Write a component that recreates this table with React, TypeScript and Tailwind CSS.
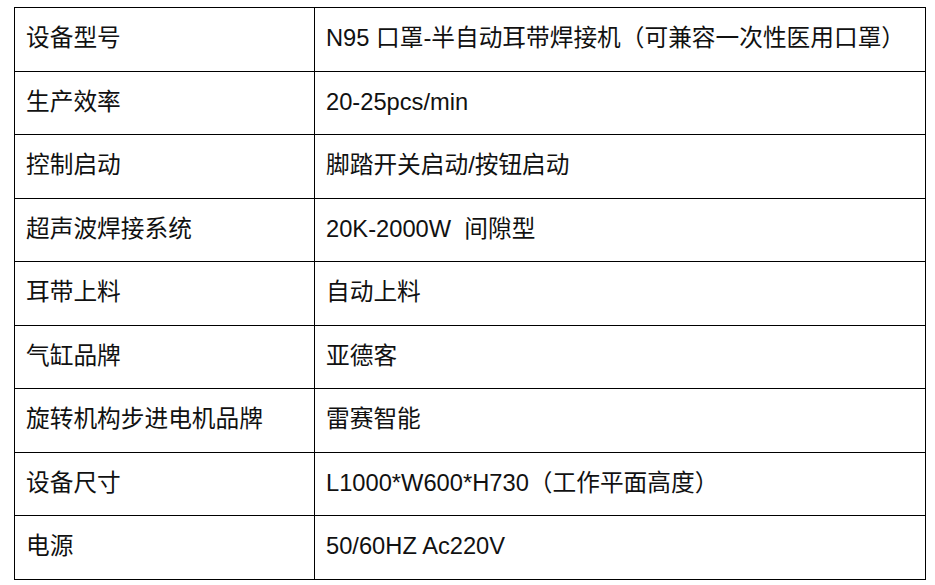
const ROWS: [string, string][] = [
  ["设备型号", "N95 口罩-半自动耳带焊接机（可兼容一次性医用口罩）"],
  ["生产效率", "20-25pcs/min"],
  ["控制启动", "脚踏开关启动/按钮启动"],
  ["超声波焊接系统", "20K-2000W  间隙型"],
  ["耳带上料", "自动上料"],
  ["气缸品牌", "亚德客"],
  ["旋转机构步进电机品牌", "雷赛智能"],
  ["设备尺寸", "L1000*W600*H730（工作平面高度）"],
  ["电源", "50/60HZ Ac220V"],
];

export default function App() {
  return (
    <div className="w-[935px] h-[585px] bg-white pt-[7px] pl-[14px]">
      <table
        className="border-collapse border border-black text-[23.7px] leading-none text-[#111]"
        style={{ fontFamily: '"Liberation Sans", "Noto Sans CJK SC", sans-serif' }}
      >
        <tbody>
          {ROWS.map(([k, v]) => (
            <tr key={k} className="h-[63.5px]">
              <td className="w-[300px] border border-black pl-[11px] align-middle whitespace-pre">{k}</td>
              <td className="w-[611px] border border-black pl-[11px] align-middle whitespace-pre">{v}</td>
            </tr>
          ))}
        </tbody>
      </table>
    </div>
  );
}
